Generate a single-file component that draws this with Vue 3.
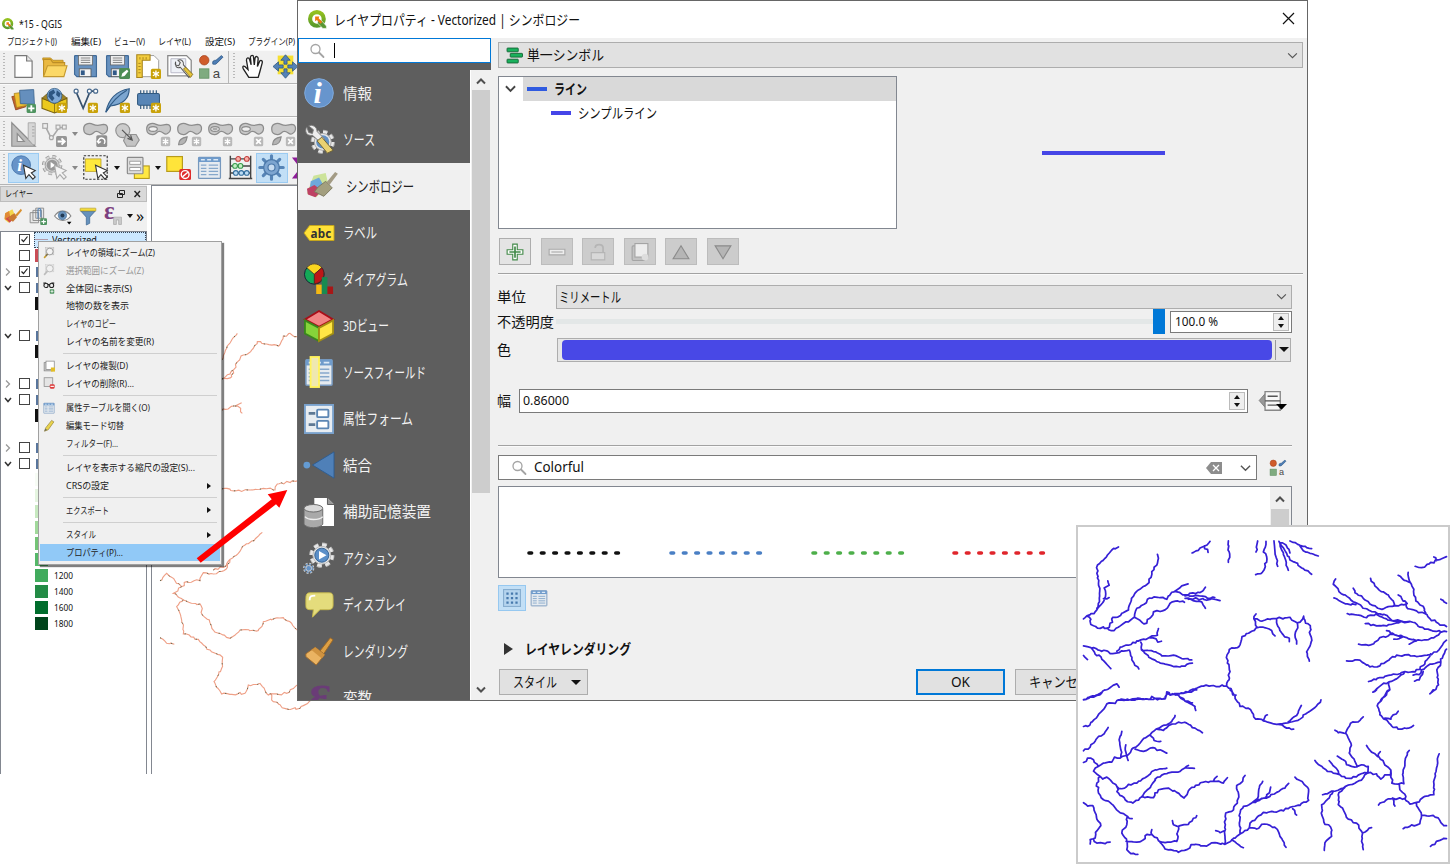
<script setup>
const vFit = {
  mounted(el, { value }) {
    const natural = el.getBoundingClientRect().width
    if (!natural || !value) return
    el.style.transform = `scaleX(${value / natural})`
    el.style.marginRight = `${value - natural}px`
  },
}

/* ---------- icon parts on a 32 unit grid ---------- */
const star = '<rect x="19" y="19" width="13" height="13" rx="2" fill="#c9a20a"/><path d="M25.5 21v9M21.6 23.2l7.8 4.6M29.4 23.2l-7.8 4.6" stroke="#fff" stroke-width="1.7"/>'
const gstar = '<rect x="19" y="19" width="12" height="12" rx="2" fill="#b9b9b9"/><path d="M25 21v8M21.5 23l7 4M28.5 23l-7 4" stroke="#fff" stroke-width="1.6"/>'
const gcross = '<rect x="19" y="19" width="12" height="12" rx="2" fill="#b9b9b9"/><path d="M22 22l6 6M28 22l-6 6" stroke="#fff" stroke-width="2.2"/>'
const blob = '<path d="M1 10C0 3 7 0 13 3s8 1 13 0c7 0 7 9 1 12-4 2-5-3-10-3-4 0-4 5-9 4-4 0-7-2-7-6Z" fill="#c8c8c8" stroke="#8c8c8c" stroke-width="1.6"/>'
const hole = '<ellipse cx="9" cy="9" rx="5.500" ry="3" fill="#eee" stroke="#8c8c8c" stroke-width="1.5"/>'
const drop = '<path d="M2 29c0-6 4-9 11-10-1 6-3 11-11 10Z" fill="#b4b4b4" stroke="#8c8c8c" stroke-width="1.5"/>'
const cursor = (f, s) => `<path d="M16 13l3 17 4-5 5 6 3-3-5-5 5-3Z" fill="${f}" stroke="${s}" stroke-width="1.4"/>`
const gear = (cx, cy, r, fill, stroke, w = 3) =>
  `<g stroke="${stroke}" stroke-width="1"><circle cx="${cx}" cy="${cy}" r="${r}" fill="none" stroke="${stroke}" stroke-width="${w + 2}" stroke-dasharray="${r * 0.43} ${r * 0.355}"/><circle cx="${cx}" cy="${cy}" r="${r}" fill="none" stroke="${fill}" stroke-width="${w}" stroke-dasharray="${r * 0.43} ${r * 0.355}"/><circle cx="${cx}" cy="${cy}" r="${r - w / 2}" fill="${fill}"/></g>`
const shapes = '<circle cx="8" cy="8" r="6" fill="#cf5b2b" stroke="#a8431c"/><path d="M19 13c-1-4 1-5 4-5l7-6 2 2-8 8c-2 2-4 1-5 1Z" fill="#4d7db5" stroke="#2f5885"/><rect x="2" y="19" width="12" height="12" fill="#7fab80" stroke="#5f8f62"/><text x="19" y="31" font-family="Liberation Sans" font-size="17" fill="#444">a</text>'
const table = '<rect x="2" y="3" width="28" height="27" rx="1" fill="#e6ebf0" stroke="#7798bd" stroke-width="1.6"/><path d="M2 3h28v6H2Z" fill="#6f9bcb"/><path d="M5 6h5M13 6h5M21 6h6" stroke="#dce9f6" stroke-width="2"/><path d="M5 13h7M15 13h12M5 17h7M15 17h12M5 21h7M15 21h12M5 25h7M15 25h12" stroke="#86a8cb" stroke-width="1.6"/>'
const page = '<path d="M5 2h15l7 7v21H5Z" fill="#fff" stroke="#777" stroke-width="1.5"/><path d="M20 2v7h7" fill="#e8e8e8" stroke="#777" stroke-width="1.5"/>'
const disk = '<path d="M3 2h26a1 1 0 0 1 1 1v26H5l-3-3V3a1 1 0 0 1 1-1Z" fill="#6791bf" stroke="#416b99" stroke-width="1.5"/><rect x="7" y="2" width="18" height="12" fill="#eee" stroke="#666"/><path d="M10 5h12M10 8h12M10 11h12" stroke="#888" stroke-width="1.3"/><rect x="8" y="19" width="15" height="10" fill="#f4f4f4" stroke="#555"/><rect x="10" y="21" width="5" height="6" fill="#315a88"/>'
const brush = '<path d="M2 11L15 4l5 12-12 12-7-6Z" fill="#f3d64c"/><path d="M2 11l7-4 2 10-7 7-3-3Z" fill="#e08a36"/><path d="M3 21l8-5 7 4-8 8Z" fill="#d24a4a"/><path d="M13 14l6-3 4 7-7 8-9-5Z" fill="#c97b33"/><path d="M20 14L30 3l2 3-9 11Z" fill="#d9912f"/>'
const magnifier = '<circle cx="13" cy="12" r="9" fill="none" stroke="#a4a4a4" stroke-width="2.6"/><path d="M20 19l9 9" stroke="#a4a4a4" stroke-width="3.6" stroke-linecap="round"/>'

const icons = {
  logo: '<defs><linearGradient id="lg" x2="0" y2="1"><stop stop-color="#94c11f"/><stop offset="1" stop-color="#5a9a2a"/></linearGradient></defs><circle cx="15" cy="15" r="11.500" fill="none" stroke="url(#lg)" stroke-width="7"/><path d="M17 17l5 0 9 10v4h-6L16 22Z" fill="#589632" stroke="#fff" stroke-width="1"/><path d="M12 11h7l-1 3 6 6-3 3-6-6-3 2Z" fill="#ee7913" />',
  search: magnifier,
  page,
  folder: '<path d="M1 8V5h10l3 3h13v4" fill="#e0ae2c" stroke="#b5871d"/><path d="M2 28V7h9l3 4h15v5" fill="#eab941" stroke="#bd8e25" stroke-width="1.4"/><path d="M2 29l5-14h25l-4 14Z" fill="#fbd867" stroke="#c4992f" stroke-width="1.4"/>',
  save: disk,
  saveas: disk + '<rect x="18" y="18" width="14" height="14" rx="2" fill="#4d8d54"/><path d="M21 29l1-4 6-5 2 2-5 6Z" fill="#fff"/>',
  layout: '<path d="M3 2h20l6 6v21H3Z" fill="#fff" stroke="#888"/><path d="M1 1h17v7H8v22H1Z" fill="#f2cc3e" stroke="#a8851d" stroke-width="1.4"/><path d="M5 4v3M9 4v3M13 4v3M3 12h3M3 16h3M3 20h3M3 24h3" stroke="#987618"/>' + star,
  manager: '<path d="M1 2h24l6 6v20H1Z" fill="#fff" stroke="#888" stroke-width="1.6"/><path d="M5 6h19v18H5Z" fill="#eef1f7" stroke="#aab"/><path d="M11 10c-2 5 2 9 6 7l11 13 4-4-11-12c1-5-3-8-7-6l3 3-2 4-4-1Z" fill="#eee" stroke="#555" stroke-width="1.3"/><path d="M21 19l9 11 3-4-9-9Z" fill="#e5c53c" stroke="#876d18"/>',
  shapes,
  hand: '<path d="M10 30L3 19c-2-4 1-5 4-1l2 2L7 8c0-4 3-4 4-1l2 7-1-10c1-3 4-3 4 0l1 10 1-9c1-3 4-2 4 1l-1 10 3-7c2-2 4 0 3 3l-3 11-2 7Z" fill="#fff" stroke="#222" stroke-width="1.7"/>',
  pan: '<rect x="6" y="2" width="20" height="24" fill="#f6df31"/><path d="M16 1l6 7h-4v5h-4V8h-4ZM16 31l6-7h-4v-5h-4v5h-4ZM0 16l7-6v4h6v4H7v4ZM32 16l-7-6v4h-6v4h6v4Z" fill="#5482b8" stroke="#31597f"/>',
  layers: '<path d="M1 11l14-3 4 16-13 4Z" fill="#c4612d" stroke="#88421e"/><path d="M4 7l15-2 3 17-15 3Z" fill="#efbf30" stroke="#a9821f"/><path d="M11 3l18-1 1 19-18-1Z" fill="#658fbd" stroke="#38628c"/><rect x="20" y="20" width="12" height="12" rx="2" fill="#4f9460"/><path d="M26 22v8M22 26h8" stroke="#fff" stroke-width="2.3"/>',
  globe: '<path d="M0 13l16 6 16-6v13l-16 6L0 26Z" fill="#ebc91e" stroke="#7c6514" stroke-width="1.4"/><path d="M0 13l7-6h18l7 6-16 7Z" fill="#a18424" stroke="#6b5510"/><circle cx="16" cy="10" r="9.5" fill="#7fa9d6" stroke="#315b83"/><path d="M9 5l6-3 2 4-4 3 3 4-3 4-5-6ZM19 3l5 4-2 5-4-3Z" fill="#2d5682"/><path d="M16 20v12" stroke="#7c6514"/>' + star,
  vnew: '<path d="M4 5l9 21L22 4h8" fill="none" stroke="#38526e" stroke-width="2.2"/><g fill="#fff" stroke="#48698d" stroke-width="1.5"><circle cx="4" cy="4" r="2.6"/><circle cx="21" cy="4" r="2.6"/><circle cx="29" cy="4" r="2.6"/></g>' + star,
  feather: '<path d="M1 31c3-14 12-27 30-30 0 12-8 20-24 22Z" fill="#7ca6d0" stroke="#315c87" stroke-width="1.5"/><path d="M1 31C8 19 16 10 28 3" fill="none" stroke="#315c87" stroke-width="1.400"/>' + star,
  chip: '<path d="M6 3v24M10 3v24M14 3v24M18 3v24M22 3v24M26 3v24" stroke="#31597f" stroke-width="1.5"/><rect x="2" y="7" width="28" height="15" rx="2" fill="#5785b6" stroke="#31597f" stroke-width="1.3"/>' + star,
  ruler: '<path d="M1 1v30h30L1 1Zm7 14l9 10H8Z" fill="#bcbcbc" fill-rule="evenodd" stroke="#8d8d8d" stroke-width="1.5"/><path d="M22 1h9v28h-3L22 22Z" fill="#d6d6d6" stroke="#a0a0a0"/><path d="M27 6h3M27 10h3M27 14h3M27 18h3" stroke="#999"/>',
  vgray: '<path d="M4 5l8 16L22 7h8" fill="none" stroke="#a8a8a8" stroke-width="2"/><g fill="#eee" stroke="#a8a8a8" stroke-width="1.5"><rect x="1" y="2" width="6" height="6"/><rect x="18" y="4" width="5" height="5"/><rect x="26" y="4" width="5" height="5"/><circle cx="12" cy="20" r="2.5"/></g><rect x="18" y="18" width="14" height="14" rx="2" fill="#969696"/><path d="M20 25h8M25 21l4 4-4 4" fill="none" stroke="#fff" stroke-width="2.5"/>',
  rotate: blob + '<rect x="17" y="17" width="14" height="15" rx="2" fill="#8f8f8f"/><path d="M27 28c4-6-4-10-7-5v4M18 24l2 3 3-2" fill="none" stroke="#fff" stroke-width="1.8"/>',
  simplify: '<circle cx="10" cy="11" r="9" fill="#ccc" stroke="#929292" stroke-width="1.5"/><path d="M14 16h13l4 7-5 8H15l-4-7Z" fill="#c3c3c3" stroke="#929292" stroke-width="1.5"/><path d="M9 10l12 12m-5-1l6 2-2-6" fill="none" stroke="#555" stroke-width="1.5"/>',
  ring: blob + hole + gstar,
  part: blob + drop + gstar,
  fillring: blob + hole + '<ellipse cx="9" cy="9" rx="3.5" ry="1.5" fill="#aaa"/>' + gstar,
  delring: blob + hole + gcross,
  delpart: blob + drop + gcross,
  identify: '<circle cx="13" cy="13" r="12" fill="#6693c8" stroke="#3f6ea8"/><text x="8" y="21" font-family="Liberation Serif" font-style="italic" font-weight="bold" font-size="22" fill="#fff">i</text>' + cursor('#fff', '#333'),
  actiongray: gear(13, 13, 10.5, '#d4d4d4', '#969696') + '<circle cx="13" cy="13" r="7" fill="#999"/><path d="M11 9l6 4-6 4Z" fill="#fff"/>' + cursor('#f3f3f3', '#aaa'),
  select: '<path d="M1 1h30v30H1Z" fill="none" stroke="#333" stroke-width="1.5" stroke-dasharray="3 2"/><path d="M3 5h20v16H3Z" fill="#ffe93c" stroke="#b79b1a"/>' + cursor('#fff', '#333'),
  valsel: '<rect x="12" y="14" width="19" height="16" fill="#ffe842" stroke="#b79b1a" stroke-width="1.4"/><rect x="3" y="3" width="20" height="21" rx="1" fill="#ddd" stroke="#8a8a8a" stroke-width="1.5"/><path d="M6 8h14v4H6ZM6 16h14v4H6Z" fill="#fff" stroke="#8a8a8a"/>',
  deselect: '<rect x="1" y="2" width="20" height="19" fill="#ffe43a" stroke="#b79b1a" stroke-width="1.5"/><rect x="17" y="18" width="15" height="14" rx="2" fill="#df2b2b"/><circle cx="24.500" cy="25" r="5" fill="none" stroke="#fff" stroke-width="1.8"/><path d="M21 28l7-6" stroke="#fff" stroke-width="1.8"/>',
  table,
  abacus: '<path d="M3 1v29M29 1v29M1 30h30M3 5h26M3 14h26M3 23h26" stroke="#444" stroke-width="1.8"/><g stroke-width="1.3"><g fill="#f7b0a8" stroke="#c43a3a"><circle cx="13" cy="5" r="3"/><circle cx="24" cy="5" r="3"/></g><g fill="#c5f0c5" stroke="#389a4c"><circle cx="9" cy="14" r="3"/><circle cx="16" cy="14" r="3"/></g><g fill="#bcdcf4" stroke="#316c9c"><circle cx="10" cy="23" r="3"/><circle cx="17" cy="23" r="3"/><circle cx="24" cy="23" r="3"/></g></g>',
  cog: '<path d="M16 1v30M1 16h30M5.500 5.500l21 21M26.500 5.500l-21 21" stroke="#5684b6" stroke-width="4" stroke-linecap="round"/><circle cx="16" cy="16" r="10" fill="#7da5d0" stroke="#4b78a9" stroke-width="1.6"/><circle cx="16" cy="16" r="4.500" fill="#c7dcf1" stroke="#4b78a9" stroke-width="1.5"/>',
  brush,
  addgroup: '<path d="M2 10h15v18H2ZM7 6h15v18H7ZM12 2h14v18H12Z" fill="#e8e8e8" stroke="#888" stroke-width="1.6"/><path d="M16 21V5c0-3 5-3 5 0v13" fill="none" stroke="#5684b6" stroke-width="2"/><rect x="20" y="20" width="12" height="12" rx="2" fill="#4f9460"/><path d="M26 22v8M22 26h8" stroke="#fff" stroke-width="2"/>',
  eye: '<path d="M1 16C8 5 22 4 30 16 22 27 9 26 1 16Z" fill="#fff" stroke="#888" stroke-width="2"/><circle cx="15" cy="15" r="7.500" fill="#6993bd" stroke="#3d668f"/><circle cx="15" cy="15" r="3.500" fill="#223b55"/><path d="M23 26h8l-4 5Z" fill="#000"/>',
  filter: '<path d="M3 7h26L19 18v11l-6 3V18Z" fill="#6591bd" stroke="#446d97" stroke-width="1.4"/><rect x="2" y="2" width="28" height="5" rx="1" fill="#f3dc3a" stroke="#a9911e"/>',
  epsilon: '<text x="0" y="21" font-family="Liberation Serif" font-weight="bold" font-size="44" fill="#7c4080">ε</text><path d="M17 31V18h14v13h-5v-8h-4v8Z" fill="#ccc" stroke="#999"/>',
  zoomlayer: '<rect x="7" y="2" width="22" height="19" fill="#ddd" stroke="#aaa"/><circle cx="18" cy="12" r="9" fill="#f3f3f3" stroke="#999" stroke-width="2.4"/><path d="M12 19L3 29" stroke="#c59c2c" stroke-width="4"/><path d="M12 19l-4 5" stroke="#666" stroke-width="3"/>',
  zoomgray: '<g opacity=".6"><rect x="7" y="2" width="22" height="19" fill="#ddd" stroke="#aaa"/><circle cx="18" cy="12" r="9" fill="#f3f3f3" stroke="#999" stroke-width="2.4"/><path d="M12 19L3 29" stroke="#999" stroke-width="4"/></g>',
  glasses: '<path d="M1 3h7M30 3h-7M13 7h5" stroke="#222" stroke-width="3"/><circle cx="8" cy="9" r="5.500" fill="#eee" stroke="#222" stroke-width="2.8"/><circle cx="23" cy="9" r="5.500" fill="#eee" stroke="#222" stroke-width="2.8"/><rect x="18" y="19" width="12" height="12" rx="2" fill="#4f9460"/><path d="M24 21v8M20 25h8" stroke="#fff" stroke-width="2"/>',
  dup: '<rect x="3" y="7" width="22" height="22" fill="#ccc" stroke="#888" stroke-width="2"/><rect x="8" y="3" width="22" height="22" fill="#fff" stroke="#888" stroke-width="2"/><rect x="21" y="20" width="11" height="11" fill="#e2be27"/>',
  remove: '<rect x="3" y="2" width="23" height="23" fill="#e5e5e5" stroke="#888" stroke-width="2"/><rect x="18" y="19" width="13" height="12" rx="3" fill="#dd3b3b"/><path d="M20 25h9" stroke="#fff" stroke-width="3"/>',
  pencil: '<path d="M4 30l3-9L23 1l6 4-15 21Z" fill="#e9d34c" stroke="#88762b" stroke-width="1.6"/><path d="M4 30l2-7 5 3Z" fill="#666"/>',
  info: '<circle cx="16" cy="16" r="15.300" fill="#6795cd" stroke="#80abdd"/><text x="10" y="27" font-family="Liberation Serif" font-style="italic" font-weight="bold" font-size="32" fill="#fff">i</text>',
  source: gear(20, 18, 10.5, '#e8e8e8', '#aaa') + '<circle cx="20" cy="18" r="7" fill="#6290c4"/><path d="M3 2c-3 5 0 10 6 9l9 8 4-4-8-8C14 2 9-1 5 1l5 4-1 4-4-1Z" fill="#eee" stroke="#777"/><path d="M14 17l11 13 6-3-12-14Z" fill="#ead172" stroke="#6d6132"/>',
  symbology: '<path d="M8 5l13-3 3 13-13 13-10-4Z" fill="#cde39a"/><path d="M5 11l9-4 5 9-8 8-7-5Z" fill="#6ea8dc"/><path d="M1 19l8-4 8 6-7 7-8-3Z" fill="#be4264"/><path d="M13 17l8-6 7 7-9 9-10-5Z" fill="#a39f7f" stroke="#7c795f"/><path d="M22 12L31 1l3 2-9 12Z" fill="#a39b84"/>',
  label: '<path d="M0 16l6-8h26v16H6Z" fill="#ffe138" stroke="#c6a61b"/><text x="7" y="21" font-family="Noto Sans" font-weight="bold" font-size="12.500" fill="#333" textLength="22">abc</text>',
  diagram: '<circle cx="11" cy="11" r="10.500" fill="#14a957" stroke="#123"/><path d="M11 11L3 4c4-6 13-5 16 0Z" fill="#fbd61e" stroke="#543"/><path d="M11 11l8-7c5 6 1 17-8 17Z" fill="#bd1717" stroke="#522"/><path d="M13 22h6v10h-6Z" fill="#f5b914"/><path d="M19 14h6v18h-6Z" fill="#198a52"/><path d="M25 24h6v8h-6Z" fill="#a81717"/>',
  cube: '<path d="M16 0l15 9-15 8L1 9Z" fill="#f28484" stroke="#a80f19" stroke-width="2"/><path d="M1 10l15 8v14L1 24Z" fill="#86d43a" stroke="#39871d" stroke-width="2"/><path d="M31 10l-15 8v14l15-8Z" fill="#ffe645" stroke="#a28e14" stroke-width="2"/>',
  fields: table + '<rect x="7" y="0" width="9" height="32" fill="#efe8b0" stroke="#fff35d" stroke-width="2"/>',
  form: '<rect x="1" y="1" width="30" height="30" fill="#e7ecf1" stroke="#78a0cb" stroke-width="2"/><path d="M5 10h7M5 22h7" stroke="#5e7894" stroke-width="3"/><rect x="14" y="6" width="12" height="8" rx="1" fill="#fff" stroke="#5c86b4" stroke-width="2"/><rect x="14" y="18" width="12" height="8" rx="1" fill="#fff" stroke="#5c86b4" stroke-width="2"/>',
  join: '<circle cx="3" cy="16" r="3.600" fill="#649bd2"/><path d="M9 16L32 2v28Z" fill="#4f80b8" stroke="#2e5d91"/>',
  storage: '<path d="M11 1h14l7 7v23H11Z" fill="#fff"/><path d="M25 1v7h7" fill="#999" stroke="#555"/><path d="M0 13v16c3 5 17 5 20 0V13Z" fill="#a9a9a9" stroke="#666"/><ellipse cx="10" cy="12" rx="10" ry="4" fill="#d8d8d8" stroke="#666"/><path d="M1 21c3 4 15 4 19 0" fill="none" stroke="#eee" stroke-width="1.500"/>',
  action: gear(19, 13, 11, '#e7e7e7', '#bbb') + '<circle cx="19" cy="13" r="7.500" fill="#5b8fc8" stroke="#315f90"/><path d="M16 8.500l8 4.500-8 4.500Z" fill="#fff"/>' + gear(5, 27, 4, '#6290c4', '#ccc', 2),
  display: '<path d="M6 3h21c4 0 4 3 4 6v7c0 4-2 5-6 5h-8l-8 8 1-8H7c-5 0-5-2-5-6V9c0-4 1-6 4-6Z" fill="#e4dc7c" stroke="#c6b94b"/><path d="M6 11c0-4 1-5 6-5" fill="none" stroke="#fff" stroke-width="2"/>',
  render: '<path d="M17 16L28 2l3 2-10 15Z" fill="#dea044" stroke="#9d6724"/><path d="M2 19l10-7 10 8-9 11-11-9Z" fill="#eab362" stroke="#a16c2c"/><path d="M12 12l10 8-3 4-11-9Z" fill="#d09340"/>',
  eps: '<text x="5" y="29" font-family="Liberation Serif" font-weight="bold" font-size="56" fill="#6a3c77">ε</text>',
  single: '<g fill="#19b15c" stroke="#176839" stroke-width="1.800"><rect x="2" y="2" width="21" height="7" rx="1"/><rect x="8" y="12" width="23" height="7" rx="1"/><rect x="2" y="23" width="21" height="7" rx="1"/></g>',
  plus: '<path d="M12 2h8v10h10v8H20v10h-8V20H2v-8h10Z" fill="#fff" stroke="#438a4a" stroke-width="2"/><path d="M16 6v20M6 16h20" stroke="#438a4a" stroke-width="3"/>',
  minus: '<path d="M2 11h28v10H2Z" fill="#ededed" stroke="#aaa" stroke-width="2"/><path d="M6 16h20" stroke="#aaa" stroke-width="2"/>',
  lock: '<path d="M4 17h24v13H4Z" fill="#d8d8d8" stroke="#b5b5b5" stroke-width="2"/><path d="M11 9c0-8 14-8 14 0v8" fill="none" stroke="#b5b5b5" stroke-width="3"/>',
  copy: '<rect x="2" y="5" width="23" height="26" rx="2" fill="#c2c2c2" stroke="#a4a4a4" stroke-width="2"/><rect x="7" y="1" width="23" height="24" fill="#ededed" stroke="#a4a4a4" stroke-width="2"/><circle cx="25" cy="25" r="6" fill="#ddd"/>',
  up: '<path d="M16 5l14 23H2Z" fill="#b5b5b5" stroke="#8b8b8b" stroke-width="2"/>',
  down: '<path d="M16 28L2 5h28Z" fill="#b5b5b5" stroke="#8b8b8b" stroke-width="2"/>',
  override: '<path d="M7 8v16L0 16Z" fill="#999" stroke="#777"/><path d="M7 5.500h18v22H7Z" fill="#f7f7f7" stroke="#888" stroke-width="1.600"/><path d="M10 11h12M10 21.500h12M7 16.500h18" stroke="#555" stroke-width="1.600"/><path d="M20 20h13l-6.500 7Z" fill="#000"/>',
  grid: '<rect x="1" y="1" width="30" height="30" fill="#b5d4ee" stroke="#87aed0" stroke-width="2"/><g fill="#4779ad"><path d="M6 6h4v4H6zM14 6h4v4h-4zM22 6h4v4h-4zM6 14h4v4H6zM14 14h4v4h-4zM22 14h4v4h-4zM6 22h4v4H6zM14 22h4v4h-4zM22 22h4v4h-4z"/></g>',
}

/* ---------- main window ---------- */
const menus = [
  ['プロジェクト(J)', 50, 14], ['編集(E)', 30, 13], ['ビュー(V)', 31, 13],
  ['レイヤ(L)', 33, 14], ['設定(S)', 30, 13], ['プラグイン(P)', 47, 0],
]
const toolbars = [
  ['page', 'folder', 'save', 'saveas', 'layout', 'manager', 'shapes', '|', 'hand', 'pan'],
  ['layers', 'globe', 'vnew', 'feather', 'chip'],
  ['ruler', 'vgray', 'v', 'rotate', 'simplify', 'ring', 'part', 'fillring', 'delring', 'delpart'],
  ['identify*', 'actiongray', 'v', 'select', 'V', 'valsel', 'V', 'deselect', 'table', 'abacus', 'cog*'],
]
const tree = [
  { c: 1, text: 'Vectorized', sel: true }, { c: 0, s: '#c94c55' }, { e: '>', c: 1, s: '#58759c', n: 1 },
  { e: 'v', c: 0, s: '#58759c', n: 1 }, { s: '#111' }, {}, { e: 'v', c: 0, s: '#58759c', n: 1 }, { s: '#111' }, {},
  { e: '>', c: 0, s: '#58759c', n: 1 }, { e: 'v', c: 0, s: '#58759c', n: 1 }, { s: '#111' }, {},
  { e: '>', c: 0, s: '#58759c', n: 1 }, { e: 'v', c: 0, s: '#58759c', n: 1 }, { s: '#f7fcf5' }, { s: '#e5f5e0' },
  { s: '#c7e9c0' }, { s: '#a1d99b' }, { s: '#74c476' }, { s: '#55b868' },
  { s: '#41ab5d', text: '1200' }, { s: '#238b45', text: '1400' }, { s: '#006d2c', text: '1600' }, { s: '#00441b', text: '1800' },
]
const context = [
  { t: 'レイヤの領域にズーム(Z)', w: 89, i: 'zoomlayer' }, { t: '選択範囲にズーム(Z)', w: 78, i: 'zoomgray', off: true },
  { t: '全体図に表示(S)', w: 66, i: 'glasses' }, { t: '地物の数を表示', w: 63 }, { t: 'レイヤのコピー', w: 50 },
  { t: 'レイヤの名前を変更(R)', w: 88 }, {},
  { t: 'レイヤの複製(D)', w: 62, i: 'dup' }, { t: 'レイヤの削除(R)...', w: 68, i: 'remove' }, {},
  { t: '属性テーブルを開く(O)', w: 84, i: 'table' }, { t: '編集モード切替', w: 58, i: 'pencil' }, { t: 'フィルター(F)...', w: 52 }, {},
  { t: 'レイヤを表示する縮尺の設定(S)...', w: 129 }, { t: 'CRSの設定', w: 43, a: true }, {},
  { t: 'エクスポート', w: 43, a: true }, {}, { t: 'スタイル', w: 30, a: true }, { t: 'プロパティ(P)...', w: 57, hot: true },
]

/* ---------- dialog ---------- */
const pages = [
  ['info', '情報', 29], ['source', 'ソース', 32], ['symbology', 'シンボロジー', 68], ['label', 'ラベル', 34],
  ['diagram', 'ダイアグラム', 65], ['cube', '3Dビュー', 46], ['fields', 'ソースフィールド', 83], ['form', '属性フォーム', 70],
  ['join', '結合', 29], ['storage', '補助記憶装置', 88], ['action', 'アクション', 54], ['display', 'ディスプレイ', 63],
  ['render', 'レンダリング', 65], ['eps', '変数', 29],
]
const layerButtons = ['plus', 'minus', 'lock', 'copy', 'up', 'down']
const presets = ['#111', '#4a7fc4', '#4daf4a', '#e0252b']

/* ---------- drawn lines: jittered polylines ---------- */
let seed = 7
const rnd = () => ((seed = (seed * 16807) % 2147483647) / 2147483647) - 0.5
function wiggle(list, amp, dy = 0) {
  return list.map((line) => {
    const p = line.split(' ').map((s) => s.split(',').map(Number))
    let d = `M${p[0][0]},${p[0][1] + dy}`
    for (let i = 1; i < p.length; i++) {
      const [ax, ay] = p[i - 1]
      const [bx, by] = p[i]
      const n = Math.max(1, Math.round(Math.hypot(bx - ax, by - ay) / 8))
      for (let k = 1; k <= n; k++) {
        const j = k === n ? 0 : amp
        d += `L${(ax + ((bx - ax) * k) / n + rnd() * j).toFixed(1)},${(ay + ((by - ay) * k) / n + dy + rnd() * j).toFixed(1)}`
      }
    }
    return d
  }).join('')
}

const riversTop = wiggle([
  '145,81 125,90 112,105 98,122 82,135 80,160 85,190 88,220 88,245 80,265',
  '113,183 117,196 102,204 106,230 100,245 80,270 72,281 50,288 40,297',
  '117,233 100,236', '50,288 62,298 62,314 82,325 100,321 112,325 132,332 160,311 175,306 193,292',
  '262,103 262,130 245,155 243,172 225,198 205,210 184,235 175,270 155,280 142,292 128,292 127,307 112,325',
  '193,292 200,265 222,253 232,238 245,235 262,232 290,238 305,217 320,210 335,198 354,192',
  '193,292 208,300 222,312 238,296 250,276 285,270 300,250 323,243 343,247',
  '312,215 345,225 390,218 406,202', '345,228 388,228 412,235 434,233', '345,235 382,236 410,241 432,238 450,242', '355,238 395,246 406,265',
  '420,64 411,75 395,82 385,91 366,99', '403,78 414,97', '475,63 474,90 479,102 475,127',
  '563,63 558,96', '588,64 580,96 590,110 586,140 577,157 557,164', '612,63 615,96 623,139', '627,64 635,90 647,120 655,151',
  '628,66 645,92 660,120 700,146 725,163', '630,68 648,75 660,99', '660,63 690,76 710,83 725,86', '690,78 700,92 720,100 745,108',
  '40,378 70,383 90,392 110,393 120,401 160,394 175,391', '140,394 150,382 175,376 200,363 212,360 235,354 262,346 265,326', '240,354 258,357 263,367 274,364',
  '62,383 75,403 93,412 107,430 122,446', '40,407 52,419', '178,391 185,420 206,447',
  '212,367 214,390 245,417 280,431 310,440 345,439 367,430', '214,388 250,395 285,408 310,406 335,416 365,420',
  '40,539 75,527 100,512 140,492 147,502', '140,542 188,537 235,539 245,530 262,540 286,535 290,516 300,526 355,516 375,507 400,499 430,497 470,499',
  '318,523 340,540', '470,499 477,480 478,450 472,430 471,405 485,384 507,380 516,350 545,334 562,323 552,290 558,282',
  '562,323 580,322 605,332 615,348', '556,297 570,303 592,297 620,296 660,292 665,300 682,309 696,300 701,289',
  '701,289 707,310 721,317 721,345 724,365 710,396 718,424', '682,309 680,330 675,345 680,372', '620,299 624,320 640,345 658,355 658,365',
  '470,499 483,506 488,525 498,526',
  '797,177 790,193 807,215 832,230 855,247 872,255 880,265 905,275 930,282 952,287 965,301 1000,305 1035,308 1065,328 1090,334 1130,335',
  '792,234 815,246 832,252 858,254', '850,205 862,222 880,235 900,252 920,262 940,267 955,260 985,258 1008,252 1013,266 1040,273 1065,281 1080,296 1105,310 1130,320',
  '902,175 915,198 930,212 955,225 970,243 972,257', '985,225 1012,251', '985,166 1003,181 1018,187', '1015,157 1019,184 1032,208 1038,243 1060,259 1068,280',
  '832,281 860,285 890,293 918,282 955,301 990,307', '886,311 920,318 950,318 980,309 1018,306',
  '866,373 902,375 930,353 970,343 1010,353 1040,362 1070,360 1100,348 1112,337', '950,332 975,345 997,352 972,358', '1018,373 1040,363',
  '830,423 870,421 900,441 930,438 968,410 1005,405 1040,410 1085,404 1108,389 1118,375 1130,361',
  '896,485 930,473 965,465 1005,455 1036,456 1060,437 1072,419 1082,402', '909,517 935,495 957,486 980,477 1005,456', '957,487 960,510 932,542',
  '1130,388 1120,407 1113,426 1080,433 1055,450 1048,464 1030,466', '1034,484 1048,480 1060,455', '1113,427 1101,450 1106,495 1080,522',
  '1036,139 1055,143 1078,132 1105,120 1130,110', '1092,111 1100,122', '1113,238 1130,250',
], 6)
const riversBottom = wiggle([
  '40,30 80,17 105,0', '40,110 52,110 78,85 92,67 110,42 135,41 145,30 185,31 240,29 285,27 290,7', '290,7 300,15 340,10 380,0',
  '318,12 345,34 375,50 377,62', '345,34 367,39', '40,183 60,172 85,140 102,132 114,113',
  '155,125 147,150 152,180 152,203', '167,165 168,190 174,212', '40,218 52,205 70,210 84,230 70,244 77,250 90,260 80,280 85,310 100,330 125,343 145,365 172,380 186,387',
  '84,230 100,220 125,217 133,202 150,205 172,197 190,174 205,165 222,145 240,135 258,118 290,105 305,95 315,77',
  '260,118 280,122 305,103 325,97 350,100 375,115 397,129', '240,136 252,152 272,155', '195,178 220,185 240,175 270,180 290,190',
  '90,260 98,268 110,262 128,280 140,290 155,297 175,284 200,280 225,264 245,245 270,237 290,235',
  '140,290 145,310 165,330 188,340 210,324 235,298 262,262 290,252 330,245 355,227', '345,234 373,236',
  '215,320 250,324 265,300 295,295 320,308 342,325 365,293 400,277 440,275 460,280 472,264', '430,275 441,260',
  '172,380 170,405 155,430 170,455 170,480 182,492 203,494', '168,455 200,457 220,450 225,438 245,434 265,453 285,459 320,455 325,410 310,405 307,393', '325,410 355,404 380,378', '245,420 245,435',
  '270,458 285,478 325,488 350,480 363,465 410,469 435,459 465,464 485,452 495,445 510,433',
  '40,339 52,349 68,348 78,375 80,388 92,408 76,428 75,445 60,450 60,463', '70,447 80,460 105,462 120,457',
  '525,257 518,275 500,287 506,315 502,340 485,365 467,370 466,405 465,462', '437,423 450,429 463,423',
  '510,433 508,400 510,370 520,350 545,340 565,320 568,293 578,275', '550,338 570,330 590,320 602,292', '553,338 590,325 620,308 645,295 656,281',
  '510,433 538,414 560,418 575,404 600,407 622,419 630,440 648,473', '538,414 540,400 560,384 580,368 620,367 655,357 690,347 716,332 713,293 675,262', '668,357 680,376', '485,450 500,461 520,474',
  '480,0 490,12 510,50 535,55 557,88 580,93 620,104 660,97 690,88 715,67 740,48 753,30', '655,96 680,77 694,47', '580,93 592,75', '625,104 650,115 671,118',
  '958,0 945,17 922,48 930,75 950,90 965,108 985,118 1010,116 1031,107', '945,85 963,88 970,75 985,64', '909,7 920,0', '1080,12 1090,0',
  '880,81 865,96 842,100 827,130 843,160 838,190 855,215 862,231', '795,121 805,129 827,131', '735,212 760,235 790,250 815,260 845,266 880,250 895,249', '778,213 795,232 812,257', '802,199 820,210 830,225 860,231 875,225 895,230 894,249',
  '890,167 905,187 928,202 945,226 963,241 963,260', '925,200 931,186', '893,250 920,252 933,268 945,255 963,255', '963,241 966,280 985,283 1002,282 1000,240 1006,210 1018,182',
  '988,283 990,300 1008,320 1008,332 1020,343 1040,338 1065,320 1092,315 1093,270 1100,235 1108,192', '926,346 950,330 970,326 1005,326', '968,325 975,349',
  '1040,338 1045,355 1055,378 1050,402 1020,410 1000,417', '1055,377 1090,377 1110,392 1122,408 1130,408',
  '893,250 875,271 840,285 820,295 790,304 758,315', '790,304 778,325 755,345 754,370 765,404 782,412 785,440 765,459 763,482',
  '825,293 805,315 805,345 825,370 835,388 860,400 878,430 875,455 880,480', '878,430 905,414', '1082,470 1095,464 1110,452 1130,447',
], 6, 510)
const contours = wiggle([
  '665,540 680,505 712,460', '665,598 695,590 710,548 730,525 752,515 772,485 800,492 836,498 850,468 870,460 892,470',
  '665,596 690,582 698,570', '665,692 700,678 725,668', '705,678 722,685 727,700',
  '665,927 710,932 750,930 790,925 825,930 832,912 892,902',
  '640,1170 670,1162 715,1120 735,1095 762,1082 787,1057',
  '480,1202 500,1180 525,1202 545,1220 560,1205 600,1202 610,1178 640,1182 678,1168 690,1140',
  '545,1220 520,1240 550,1260 570,1268 600,1272 607,1305 628,1320 640,1350 690,1375 720,1350 775,1352 790,1325 825,1315 850,1313 875,1330 892,1350',
  '550,1260 530,1280 545,1320 550,1362 595,1378 630,1410 668,1432 665,1465 642,1505 665,1542 735,1540 745,1515 780,1510 805,1545 860,1540 892,1515',
  '480,1373 500,1390 523,1393', '810,1540 820,1565 865,1588 900,1585 940,1555',
], 7)
</script>

<template>
  <main class="stage">
    <section class="qgis">
      <header class="qtitle"><svg class="qlogo" viewBox="0 0 32 32" v-html="icons.logo" /><span v-fit="43" class="txt">*15 - QGIS</span></header>
      <nav class="qmenu">
        <span v-for="m in menus" :key="m[0]" class="mi" :class="'g' + m[2]"><span v-fit="m[1]" class="txt">{{ m[0] }}</span></span>
      </nav>
      <div v-for="(bar, b) in toolbars" :key="b" class="toolbar">
        <i class="grip" />
        <template v-for="(n, k) in bar" :key="k">
          <template v-if="n === '|'"><i class="vsep" /><i class="grip second" /></template>
          <i v-else-if="n === 'v' || n === 'V'" class="drop" :class="{ dark: n === 'V' }" />
          <span v-else class="tool" :class="{ on: n.endsWith('*') }"><svg viewBox="0 0 32 32" v-html="icons[n.replace('*', '')]" /></span>
        </template>
        <svg v-if="b === 3" class="sigma" viewBox="0 0 14 20"><path d="M13 5V1H1l7 9-7 9h12v-4" fill="none" stroke="#8e1d98" stroke-width="3" /></svg>
      </div>
      <div class="work">
        <aside class="panel">
          <div class="ptitle">
            <span v-fit="28" class="txt">レイヤー</span>
            <svg class="pwin" viewBox="0 0 24 10"><path d="M2.500 1.500h5v4h-5zM.500 4.500h5v4h-5z" fill="#d9d9d9" stroke="#222" /><path d="M17.500 2l5.500 6M23 2l-5.500 6" stroke="#222" stroke-width="1.400" /></svg>
          </div>
          <div class="ptools">
            <svg v-for="n in ['brush', 'addgroup', 'eye', 'filter', 'epsilon']" :key="n" viewBox="0 0 32 32" v-html="icons[n]" />
            <i class="drop dark" /><span class="more">»</span>
          </div>
          <div class="ptree">
            <div v-for="(r, k) in tree" :key="k" class="trow">
              <svg class="exp" viewBox="0 0 10 10"><path v-if="r.e === 'v'" d="M2 3l3 3.500L8 3" fill="none" stroke="#333" stroke-width="1.500" /><path v-if="r.e === '>'" d="M3 1.500L6.500 5 3 8.500" fill="none" stroke="#999" stroke-width="1.300" /></svg>
              <svg class="chk" viewBox="0 0 11 11"><template v-if="r.c !== undefined"><rect x=".5" y=".5" width="10" height="10" fill="#fff" stroke="#444" /><path v-if="r.c" d="M2.500 5.500l2 2 4-5" fill="none" stroke="#222" stroke-width="1.200" /></template></svg>
              <span v-if="r.sel" class="tsel"><i class="dash" /><span v-fit="45" class="txt">{{ r.text }}</span></span>
              <template v-else><i v-if="r.s" class="sw" :class="{ layer: r.n }" :style="{ background: r.s }" /><span v-if="r.text" v-fit="19" class="txt tnum">{{ r.text }}</span></template>
            </div>
          </div>
        </aside>
        <div class="canvas" />
      </div>
    </section>
    <svg class="contours" viewBox="0 0 960 1650"><path :d="contours" fill="none" stroke="#efa087" stroke-width="3.400" /><path :d="contours" fill="none" stroke="#626b4f" stroke-width="3" stroke-dasharray="4 36" /></svg>

    <section class="ctx">
      <template v-for="(c, k) in context" :key="k">
        <div v-if="c.t" class="citem" :class="{ off: c.off, hot: c.hot }">
          <svg class="cicon" viewBox="0 0 32 32" v-html="c.i ? icons[c.i] : ''" />
          <span v-fit="c.w" class="txt">{{ c.t }}</span><i v-if="c.a" class="carrow" />
        </div>
        <div v-else class="csep"><i /></div>
      </template>
    </section>

    <section class="dialog">
      <header class="dtitle">
        <svg class="dlogo" viewBox="0 0 32 32" v-html="icons.logo" />
        <span v-fit="246" class="txt">レイヤプロパティ - Vectorized | シンボロジー</span>
        <svg class="close" viewBox="0 0 13 13"><path d="M1 1l11 11M12 1L1 12" stroke="#111" stroke-width="1.200" /></svg>
      </header>
      <div class="dbody">
        <aside class="side">
          <div class="find"><svg viewBox="0 0 32 32" v-html="icons.search" /><i class="caret" /></div>
          <div class="sidebody">
            <nav class="pages">
              <div v-for="(p, k) in pages" :key="p[0]" class="pg" :class="{ active: k === 2 }">
                <svg viewBox="0 0 32 32" v-html="icons[p[0]]" /><span v-fit="p[2]" class="txt">{{ p[1] }}</span>
              </div>
            </nav>
            <div class="sbar">
              <svg class="chev" viewBox="0 0 12 8"><path d="M2 6.500L6 2.500l4 4" fill="none" stroke="#505050" stroke-width="2" /></svg>
              <i class="thumb" />
              <svg class="chev end" viewBox="0 0 12 8"><path d="M2 1.500l4 4 4-4" fill="none" stroke="#505050" stroke-width="2" /></svg>
            </div>
          </div>
        </aside>

        <div class="form">
          <div class="combo renderer"><svg class="sicon" viewBox="0 0 32 32" v-html="icons.single" /><span v-fit="77" class="txt">単一シンボル</span><svg class="cv" viewBox="0 0 12 8"><path d="M1 1.500l5 5 5-5" fill="none" stroke="#555" stroke-width="1.300" /></svg></div>
          <div class="symbol">
            <div class="stree">
              <div class="srow"><svg class="sx" viewBox="0 0 12 8"><path d="M1 1l5 5 5-5" fill="none" stroke="#444" stroke-width="2" /></svg><div class="shead"><i class="ln a" /><span v-fit="33" class="txt bold">ライン</span></div></div>
              <div class="srow child"><i class="ln" /><span v-fit="79" class="txt">シンプルライン</span></div>
            </div>
            <div class="sview"><i /></div>
          </div>
          <div class="sbuttons"><span v-for="(n, k) in layerButtons" :key="n" :class="{ live: k === 0 }"><svg viewBox="0 0 32 32" v-html="icons[n]" /></span></div>
          <i class="rule full" />
          <div class="row unit"><label><span v-fit="29" class="txt">単位</span></label><div class="combo"><span v-fit="62" class="txt">ミリメートル</span><svg class="cv" viewBox="0 0 12 8"><path d="M1 1.500l5 5 5-5" fill="none" stroke="#555" stroke-width="1.300" /></svg></div></div>
          <div class="row opacity"><label><span v-fit="57" class="txt">不透明度</span></label><div class="slider"><i /></div><div class="spin"><span v-fit="43" class="txt">100.0 %</span><span class="ud"><i /><i class="dn" /></span></div></div>
          <div class="row color"><label><span v-fit="14" class="txt">色</span></label><div class="cbtn"><i class="fill" /><i class="cs" /><i class="tri" /></div></div>
          <div class="row width"><label><span v-fit="14" class="txt">幅</span></label><div class="spin"><span v-fit="46" class="txt">0.86000</span><span class="ud"><i /><i class="dn" /></span></div><svg class="ovr" viewBox="0 0 34 32" v-html="icons.override" /></div>
          <i class="rule" />
          <div class="row lib"><div class="libbox"><svg class="mg" viewBox="0 0 32 32" v-html="icons.search" /><span v-fit="50" class="txt">Colorful</span><svg class="clr" viewBox="0 0 16 12"><path d="M5 0h11v12H5L0 6Z" fill="#8d8d8d" /><path d="M7 3l6 6M13 3L7 9" stroke="#fff" stroke-width="1.300" /></svg><svg class="cv2" viewBox="0 0 12 8"><path d="M1 1.500l5 5 5-5" fill="none" stroke="#555" stroke-width="1.500" /></svg></div><svg class="shp" viewBox="0 0 32 32" v-html="icons.shapes" /></div>
          <div class="gallery">
            <div class="dots"><svg v-for="c in presets" :key="c" viewBox="0 0 94 4"><path d="M2 2h92" :stroke="c" stroke-width="3.600" stroke-linecap="round" stroke-dasharray="2.600 9.800" /></svg></div>
            <div class="gbar"><svg class="chev" viewBox="0 0 12 8"><path d="M2 6.500L6 2.500l4 4" fill="none" stroke="#505050" stroke-width="2" /></svg><i /></div>
          </div>
          <div class="views"><span><svg viewBox="0 0 32 32" v-html="icons.grid" /></span><svg viewBox="0 0 32 32" v-html="icons.table" /></div>
          <div class="group"><i /><span v-fit="106" class="txt bold">レイヤレンダリング</span></div>
          <footer class="foot"><span class="btn style"><span v-fit="44" class="txt">スタイル</span><i class="tri" /></span><span class="btn ok"><span v-fit="19" class="txt">OK</span></span><span class="btn cancel"><span v-fit="61" class="txt">キャンセル</span></span></footer>
        </div>
      </div>
    </section>

    <svg class="arrow" viewBox="0 0 100 80"><path d="M.7 72.300L75.700 13.300L71.700 8.300L91.300 4L83.300 21.700L80 18.300L4.700 76.700Z" fill="#f00" /></svg>

    <section class="rivers"><svg viewBox="24 21 1110 1006"><path :d="riversTop + riversBottom" /></svg></section>
  </main>
</template>

<style>
body { margin: 0; background: #fff; overflow: hidden; }
</style>

<style scoped>
* { box-sizing: border-box; }
svg { display: block; flex: none; overflow: visible; }
i { display: block; flex: none; }
.stage { position: relative; width: 1450px; height: 864px; overflow: hidden; background: #fff; color: #111; font-family: "Noto Sans", "Noto Sans CJK JP", sans-serif; }
.txt { display: inline-block; white-space: nowrap; transform-origin: 0 50%; flex: none; }
.dialog .txt { margin-bottom: 2px; }
.ctx .txt, .ptree .txt { margin-bottom: 1px; }
.bold { font-weight: 700; }

.qgis { position: absolute; left: 0; top: 0; width: 297px; height: 774px; display: flex; flex-direction: column; overflow: hidden; font-size: 9px; }
.qtitle { height: 16px; margin-top: 16px; display: flex; align-items: center; padding-left: 2px; gap: 5px; flex: none; font-size: 10px; }
.qlogo { width: 12px; height: 12px; }
.qmenu { height: 18px; display: flex; align-items: center; padding-left: 7px; flex: none; }
.mi { display: flex; flex: none; }
.g13 { margin-right: 13px; }
.g14 { margin-right: 14px; }
.toolbar { height: 33.700px; flex: none; background: #f0f0f0; border-bottom: 1px solid #b4b4b4; border-top: 1px solid #fafafa; display: flex; align-items: center; overflow: hidden; }
.grip { width: 2px; height: 27px; margin: 0 3px; background: repeating-linear-gradient(#b9b9b9 0 1px, transparent 1px 3px); }
.grip.second { margin: 0 3px 0 4px; }
.vsep { width: 1px; height: 32px; background: #b8b8b8; margin-left: 2px; }
.tool { width: 31.200px; height: 30px; display: flex; align-items: center; justify-content: center; flex: none; }
.tool svg { width: 25px; height: 25px; }
.tool.on { background: #c2dff6; border: 1px solid #9bcbf2; }
.drop { width: 6px; height: 0; border: 3px solid transparent; border-top: 4px solid #888; border-bottom: 0; margin: 0 2px; }
.drop.dark { border-top-color: #111; }
.sigma { width: 14px; height: 20px; margin-left: 6px; }
.work { flex: 1; display: flex; min-height: 0; }
.panel { width: 147px; display: flex; flex-direction: column; background: #f0f0f0; flex: none; }
.ptitle { height: 16px; flex: none; margin-top: 1px; background: #d9d9d9; border: 1px solid #bdbdbd; display: flex; align-items: center; padding-left: 4px; }
.pwin { width: 24px; height: 10px; margin-left: auto; margin-right: 5px; }
.ptools { height: 29px; flex: none; display: flex; align-items: center; padding-left: 4px; }
.ptools svg { width: 18px; height: 18px; margin-right: 7px; }
.ptools .drop { margin: 0 3px 0 -2px; }
.more { font-size: 16px; line-height: 16px; }
.ptree { flex: 1; background: #fff; border: 1px solid #828790; border-bottom: 0; overflow: hidden; }
.trow { height: 16px; display: flex; align-items: center; padding-left: 2px; }
.exp { width: 10px; height: 10px; margin-right: 6px; }
.chk { width: 11px; height: 11px; margin-right: 4px; }
.tsel { height: 16px; flex: 1; background: #cce8ff; border: 1px dotted #345; display: flex; align-items: center; }
.dash { width: 13px; height: 1px; background: #b29aa9; margin-right: 4px; }
.sw { width: 13px; height: 13px; margin-left: 1px; }
.sw.layer { margin-left: 2px; height: 10px; }
.tnum { margin-left: 6px; }
.canvas { flex: 1; margin-left: 4px; background: #fff; border: 1px solid #828790; border-width: 1px 0 0 1px; }
.contours { position: absolute; left: 0; top: 180px; width: 320px; height: 550px; }

.ctx { position: absolute; left: 38px; top: 241px; width: 184px; height: 324px; background: #f0f0f0; border: 1px solid #a0a0a0; box-shadow: 2px 2px 1px rgba(0, 0, 0, .5); padding: 2px 1px; font-size: 9.500px; color: #222; }
.citem { height: 17.650px; display: flex; align-items: center; padding-left: 3px; }
.cicon { width: 12px; height: 12px; margin-right: 11px; }
.citem.off { color: #969696; }
.citem.hot { background: #91c9f7; }
.carrow { border: 3px solid transparent; border-left: 4px solid #111; border-right: 0; margin-left: auto; margin-right: 9px; }
.csep { height: 7px; padding: 3px 3px 0 23px; }
.csep i { height: 1px; background: #cfcfcf; }

.dialog { position: absolute; left: 297px; top: 0; width: 1011px; height: 701px; background: #f0f0f0; border: 1px solid #666; display: flex; flex-direction: column; overflow: hidden; font-size: 14px; }
.dtitle { height: 37px; flex: none; background: #fff; display: flex; align-items: center; padding-left: 10px; }
.dlogo { width: 19px; height: 19px; margin-right: 7px; margin-bottom: 1px; }
.close { width: 13px; height: 13px; margin-left: auto; margin-right: 12px; margin-bottom: 2px; }
.dbody { flex: 1; display: flex; min-height: 0; }
.side { width: 193px; background: #5e5e5e; display: flex; flex-direction: column; flex: none; }
.find { height: 25px; flex: none; background: #fff; border: 1px solid #0078d7; display: flex; align-items: center; padding-left: 10px; }
.find svg { width: 16px; height: 16px; margin-right: 9px; }
.caret { width: 1px; height: 15px; background: #000; }
.sidebody { flex: 1; margin-top: 7px; display: flex; min-height: 0; }
.pages { width: 172px; overflow: hidden; color: #f2f2f2; }
.pg { height: 46.500px; display: flex; align-items: center; padding-left: 6px; font-size: 15px; }
.pg svg { width: 30px; height: 30px; margin-right: 9px; }
.pg.active { background: #f0f0f0; color: #222; }
.pg.active svg { margin-left: 2px; margin-right: 10px; }
.sbar { width: 21px; background: #f0f0f0; display: flex; flex-direction: column; align-items: center; border-left: 1px solid #fff; }
.chev { width: 12px; height: 8px; margin: 7px 0 5px; }
.thumb { width: 18px; height: 403px; background: #cdcdcd; }
.end { margin: auto 0 6px; }

.form { flex: 1; padding: 4px 3px 0 7px; display: flex; flex-direction: column; align-items: flex-start; min-width: 0; }
.combo { height: 25px; border: 1px solid #adadad; background: #e1e1e1; display: flex; align-items: center; padding-left: 2px; }
.renderer { width: 805px; height: 26px; flex: none; }
.sicon { width: 17px; height: 17px; margin: 0 4px 0 5px; }
.cv { width: 11px; height: 7px; margin-left: auto; margin-right: 4px; }
.symbol { display: flex; margin-top: 8px; height: 153px; flex: none; align-self: stretch; }
.stree { width: 399px; border: 1px solid #828790; background: #fff; }
.srow { height: 24px; display: flex; align-items: center; }
.sx { width: 11px; height: 8px; margin: 0 7px 0 6px; }
.shead { flex: 1; height: 24px; background: #d9d9d9; display: flex; align-items: center; padding-left: 4px; }
.ln { width: 20px; height: 4px; background: #4545e8; margin-right: 7px; }
.ln.a { background: #2f5ae0; }
.srow.child { padding-left: 52px; }
.sview { flex: 1; display: flex; align-items: center; justify-content: center; padding-left: 6px; }
.sview i { width: 123px; height: 4px; background: #4646e6; }
.sbuttons { display: flex; gap: 9.500px; margin: 9px 0 0 1px; flex: none; }
.sbuttons span { width: 32px; height: 27px; border: 1px solid #bcbcbc; background: #ccc; display: flex; align-items: center; justify-content: center; }
.sbuttons .live { background: #e4e4e4; border-color: #adadad; }
.sbuttons svg { width: 18px; height: 18px; }
.rule { width: 794px; height: 2px; background: #a2a2a2; border-bottom: 1px solid #fafafa; }
.rule.full { width: 805px; margin-top: 8px; }
.row { width: 794px; flex: none; display: flex; align-items: center; }
.row label { width: 58px; flex: none; display: flex; margin-left: -1px; }
.row label + * { margin-left: 1px; }
.unit { margin-top: 9px; height: 25px; }
.unit .combo { flex: 1; height: 24px; }
.opacity { height: 25px; }
.slider { flex: 1; height: 25px; display: flex; align-items: center; justify-content: flex-end; background: linear-gradient(#e3e7e7, #e3e7e7) 0 50% / 100% 5px no-repeat; margin-right: 5px; }
.slider i { width: 12px; height: 25px; background: #0078d7; }
.spin { width: 122px; height: 22px; background: #fff; border: 1px solid #7a7a7a; display: flex; align-items: center; padding-left: 4px; font-size: 13px; }
.ud { margin-left: auto; margin-right: 2px; width: 16px; height: 18px; border: 1px solid #bbb; background: linear-gradient(#eee 47%, #aaa 47% 53%, #eee 53%); display: flex; flex-direction: column; justify-content: space-around; align-items: center; }
.ud i { border: 3.500px solid transparent; border-bottom: 4px solid #111; border-top: 0; }
.ud i.dn { border-top: 4px solid #111; border-bottom: 0; }
.color { margin-top: 3px; height: 25px; }
.color label { width: 59px; }
.cbtn { width: 734px; height: 24px; border: 1px solid #adadad; background: #e6e6e6; display: flex; align-items: center; padding-left: 4px; }
.fill { width: 710px; height: 20px; background: #4848e6; border-radius: 4px; }
.cs { width: 1px; height: 20px; background: #999; margin: 0 3px; }
.tri { border: 5px solid transparent; border-top: 5px solid #111; border-bottom: 0; }
.width { margin-top: 26px; height: 25px; }
.width label { width: 21px; }
.width .spin { width: 729px; height: 24px; padding-left: 3px; }
.ovr { width: 29px; height: 27px; margin-left: 11px; }
.width + .rule { margin-top: 32px; }
.lib { margin-top: 8px; height: 25px; }
.libbox { width: 759px; height: 25px; border: 1px solid #7a7a7a; background: #fff; display: flex; align-items: center; padding-left: 12px; }
.mg { width: 16px; height: 16px; margin-right: 7px; }
.clr { width: 16px; height: 12px; margin-left: auto; }
.cv2 { width: 11px; height: 8px; margin: 0 5px 0 18px; }
.shp { width: 17px; height: 17px; margin-left: 12px; }
.gallery { width: 794px; height: 92px; flex: none; margin-top: 6px; border: 1px solid #828790; background: #fff; display: flex; justify-content: space-between; }
.dots { display: flex; padding: 64px 0 0 28px; gap: 47.800px; }
.dots svg { width: 94px; height: 4px; }
.gbar { width: 21px; background: #f0f0f0; padding-left: 1px; }
.gbar i { width: 18px; height: 68px; background: #cdcdcd; }
.gbar .chev { margin: 8px 3px 6px; }
.views { display: flex; align-items: center; gap: 4px; margin-top: 7px; flex: none; }
.views span { width: 28px; height: 26px; background: #c2dff6; border: 1px solid #96c8f0; display: flex; align-items: center; justify-content: center; }
.views svg { width: 18px; height: 18px; }
.group { height: 24px; margin-top: 26px; display: flex; align-items: center; padding-left: 6px; flex: none; }
.group i { border: 6px solid transparent; border-left: 9px solid #333; border-right: 0; margin-right: 12px; }
.foot { display: flex; margin: 8px 0 0 1px; flex: none; }
.btn { width: 89px; height: 26px; border: 1px solid #adadad; background: #e1e1e1; display: flex; align-items: center; justify-content: center; flex: none; }
.style { justify-content: flex-start; padding-left: 13px; }
.style .tri { margin-left: 14px; }
.ok { border: 2px solid #0078d7; margin-left: 328px; }
.cancel { margin-left: 10px; }

.arrow { position: absolute; left: 196px; top: 486px; width: 100px; height: 80px; }
.rivers { position: absolute; left: 1076px; top: 525px; width: 374px; height: 339px; background: #fff; border: 2px solid #cbcbcb; }
.rivers svg { width: 370px; height: 335px; }
.rivers path { fill: none; stroke: #3620d6; stroke-width: 5.200; stroke-linejoin: round; stroke-linecap: round; }
</style>
